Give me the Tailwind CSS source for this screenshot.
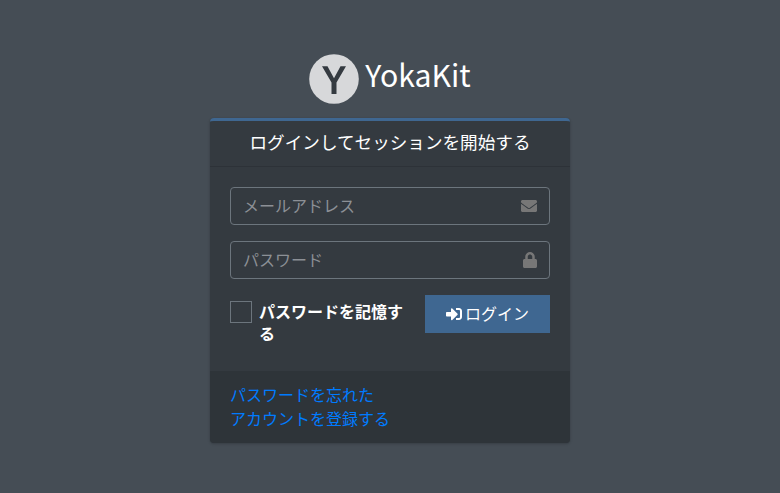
<!DOCTYPE html>
<html lang="ja">
<head>
<meta charset="utf-8">
<title>YokaKit</title>
<script src="https://cdn.jsdelivr.net/npm/@tailwindcss/browser@4"></script>
</head>
<body class="h-[493px] overflow-hidden bg-[#454d55] font-['Noto_Sans_CJK_JP',sans-serif] text-base text-white">
<main class="mx-auto flex w-[360px] flex-col pt-[54px]">
  <div class="flex h-[64px] items-start justify-center gap-1.5">
    <svg class="size-[50px] shrink-0" viewBox="0 0 50 50"><circle cx="25" cy="25" r="24.8" fill="#d7d8da"/><path d="M13 12.300h5.500L25 24.300 31.500 12.300H37L27.500 28.500V40h-5V28.500z" fill="#343a40"/></svg>
    <span class="-mt-1 text-[30.2px] leading-[48px] whitespace-nowrap">YokaKit</span>
  </div>
  <section class="overflow-hidden rounded border-t-[3px] border-[#3f6791] bg-[#343a40] shadow-[0_0_1px_rgba(0,0,0,0.13),0_1px_3px_rgba(0,0,0,0.2)]">
    <h1 class="flex h-[46px] items-center justify-center border-b border-black/12 pb-[5px] text-[17.6px] leading-[21px]">ログインしてセッションを開始する</h1>
    <form class="h-[204px] p-5">
      <div class="mb-4 flex h-[38px] items-center justify-between rounded border border-[#6c757d] px-3">
        <span class="pb-0.5 leading-6 text-[#8c9096]">メールアドレス</span>
        <svg class="size-4" viewBox="0 0 512 512" fill="#777"><path d="M502.3 190.8c3.900-3.100 9.700-.2 9.700 4.700V400c0 26.500-21.500 48-48 48H48c-26.500 0-48-21.500-48-48V195.600c0-5 5.700-7.800 9.700-4.700 22.400 17.400 52.100 39.500 154.100 113.600 21.100 15.400 56.700 47.800 92.200 47.600 35.700.3 72-32.800 92.300-47.600 102-74.100 131.600-96.300 154-113.700zM256 320c23.200.4 56.600-29.200 73.400-41.400 132.700-96.300 142.800-104.700 173.400-128.700 5.800-4.500 9.200-11.500 9.200-18.900v-19c0-26.500-21.500-48-48-48H48c-26.500 0-48 21.500-48 48v19c0 7.400 3.400 14.300 9.200 18.900 30.600 23.900 40.700 32.400 173.400 128.700 16.800 12.200 50.200 41.800 73.400 41.400z"/></svg>
      </div>
      <div class="mb-4 flex h-[38px] items-center justify-between rounded border border-[#6c757d] px-3">
        <span class="pb-0.5 leading-6 text-[#8c9096]">パスワード</span>
        <svg class="h-4 w-3.5" viewBox="0 0 448 512" fill="#777"><path d="M400 224h-24v-72C376 68.200 307.800 0 224 0S72 68.200 72 152v72H48c-26.500 0-48 21.500-48 48v192c0 26.500 21.500 48 48 48h352c26.500 0 48-21.500 48-48V272c0-26.500-21.500-48-48-48zm-104 0H152v-72c0-39.700 32.300-72 72-72s72 32.300 72 72v72z"/></svg>
      </div>
      <div class="flex items-start justify-between">
        <label class="flex w-[180px] gap-[7px] pt-1.5">
          <span class="size-[22px] shrink-0 border border-[#6c757d]"></span>
          <span class="-mt-px text-base leading-[22px] font-bold">パスワードを記憶する</span>
        </label>
        <button type="button" class="flex h-[38px] w-[125px] items-center justify-center gap-[3px] bg-[#3f6791] leading-6">
          <svg class="size-4" viewBox="0 0 512 512" fill="white"><path d="M416 448h-84c-6.600 0-12-5.400-12-12v-40c0-6.600 5.400-12 12-12h84c17.700 0 32-14.300 32-32V160c0-17.700-14.300-32-32-32h-84c-6.600 0-12-5.400-12-12V76c0-6.600 5.400-12 12-12h84c53 0 96 43 96 96v192c0 53-43 96-96 96zm-47-201L201 79c-15-15-41-4.500-41 17v96H24c-13.300 0-24 10.700-24 24v96c0 13.300 10.700 24 24 24h136v96c0 21.500 26 32 41 17l168-168c9.300-9.400 9.300-24.600 0-34z"/></svg>
          <span class="pb-0.5">ログイン</span>
        </button>
      </div>
    </form>
    <nav class="flex h-[72px] flex-col bg-black/10 px-5 py-[11px] leading-6 text-[#007bff]">
      <a href="#">パスワードを忘れた</a>
      <a href="#">アカウントを登録する</a>
    </nav>
  </section>
</main>
</body>
</html>
